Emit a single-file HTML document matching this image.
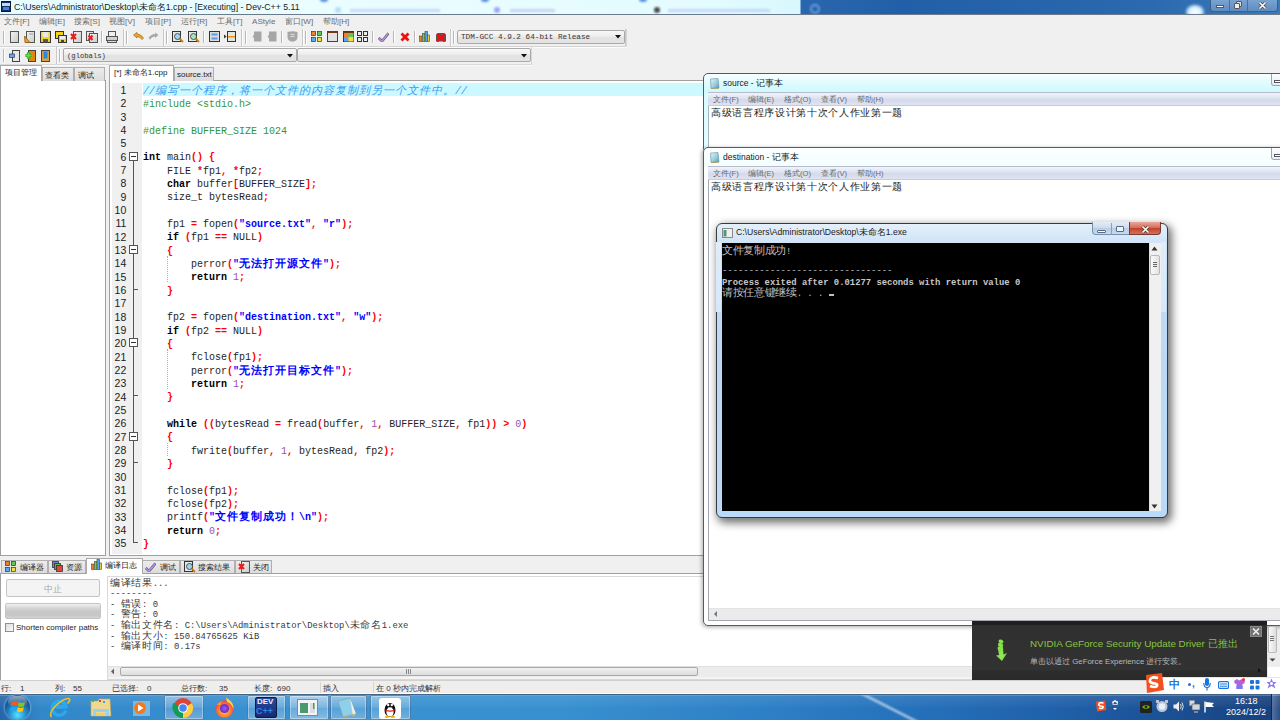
<!DOCTYPE html><html><head><meta charset="utf-8"><style>*{margin:0;padding:0;box-sizing:border-box}
html,body{width:1280px;height:720px;overflow:hidden;background:#f0f0f0;font-family:"Liberation Sans",sans-serif;font-size:9px;color:#000;position:relative}
.a{position:absolute}
.nw{white-space:nowrap}
#title{left:0;top:0;width:1280px;height:15px;overflow:hidden;background:linear-gradient(90deg,#e6fcff 0,#eafdff 300px,#e4fcff 700px,#d8f8fd 800px,#2a66ad 801px,#2160a8 900px,#2562aa 1000px,#2b6aaf 1150px,#3a7aba 1280px);border-bottom:1px solid #6b7b8c}
.menu span{position:absolute;top:1px;font-size:8.1px;line-height:11px;color:#6d6d6d;white-space:nowrap}
.sepv{position:absolute;width:2px;border-left:1px solid #c8c8c8;border-right:1px solid #fcfcfc}
.grip{position:absolute;width:2px;border-left:1px solid #b8b8b8;border-right:1px solid #fff}
.code{font-family:"Liberation Mono",monospace;font-size:10px;white-space:pre}
.k{font-weight:bold;color:#000}
.o{font-weight:bold;color:#ff0000}
.s{font-weight:bold;color:#0000ff}
.n{color:#9b4fb0}
.i{color:#1e1e1e}
.p{color:#33963a}
.c{color:#3a9cf2;font-style:italic}
.ln{position:absolute;left:108.3px;width:18px;text-align:right;font-family:"Liberation Sans",sans-serif;font-size:10.5px;color:#202020}
.cl{position:absolute;left:143px;height:13.333px;line-height:13.333px}
.tab{position:absolute;font-size:8px;line-height:11px;color:#1c1c1c;white-space:nowrap}
.ico{position:absolute}
.log{font-family:"Liberation Mono",monospace;font-size:8.9px;line-height:10.6px;white-space:pre;color:#3a3a3a}
.w{font-size:10px;letter-spacing:.67px}
.status span{position:absolute;top:2.5px;font-size:8px;line-height:10px;color:#333;white-space:nowrap}
.npmenu span{position:absolute;top:2px;font-size:7.6px;line-height:10px;color:#6a6a6a;white-space:nowrap}
.cw{font-size:11px;letter-spacing:1px}
</style></head><body>
<div id="title" class="a">
<div class="a" style="left:320px;top:-4px;width:8px;height:6px;border-radius:4px;background:#5a90e0;filter:blur(1px)"></div>
<div class="a" style="left:481px;top:-4px;width:8px;height:6px;border-radius:4px;background:#5a90e0;filter:blur(1px)"></div>
<div class="a" style="left:639px;top:-4px;width:8px;height:6px;border-radius:4px;background:#5a90e0;filter:blur(1px)"></div>
<div class="a" style="left:335px;top:7px;width:6px;height:6px;border-radius:3px;background:#b8dcf6;filter:blur(.8px)"></div>
<div class="a" style="left:494px;top:7px;width:6px;height:6px;border-radius:3px;background:#9aa8f0;filter:blur(.8px)"></div>
<div class="a" style="left:654px;top:7px;width:6px;height:6px;border-radius:3px;background:#4a4a4a;filter:blur(.8px)"></div>
<div class="a" style="left:350px;top:9px;width:90px;height:3px;background:#c4dcf6;filter:blur(1px)"></div>
<div class="a" style="left:510px;top:9px;width:45px;height:3px;background:#c8d4f4;filter:blur(1px)"></div>
<div class="a" style="left:668px;top:9px;width:102px;height:3px;background:#c4d8f6;filter:blur(1px)"></div>
<div class="a" style="left:810px;top:4px;width:10px;height:10px;border-radius:5px;border:2px solid #6a9ee0;filter:blur(1px)"></div>
<div class="a" style="left:1185px;top:4px;width:20px;height:16px;border-radius:10px;background:radial-gradient(#ffffff 0,#d8f0ff 45%,rgba(120,180,240,0) 75%);filter:blur(1px)"></div>
<div class="a" style="left:1px;top:1px;width:10px;height:11px;background:#10306a;border:1px solid #0a1a3c"><div class="a" style="left:0;top:1px;width:8px;height:3px;background:#c8d6ee"></div><div class="a" style="left:1px;top:5px;width:6px;height:3px;background:#3a86e0"></div></div>
<div class="a nw" style="left:14px;top:1px;font-size:8.74px;line-height:13px;color:#1a1a1a">C:\Users\Administrator\Desktop\未命名1.cpp - [Executing] - Dev-C++ 5.11</div>
<div class="a" style="left:1210px;top:0;width:68px;height:12px;border:1px solid #3e5f88;border-top:none;border-radius:0 0 3px 3px;background:linear-gradient(#7aa3d0,#5f8cc0)"></div>
<div class="a" style="left:1229px;top:0;width:1px;height:11px;background:#4c6f9a"></div>
<div class="a" style="left:1247px;top:0;width:1px;height:11px;background:#4c6f9a"></div>
<div class="a" style="left:1216px;top:5px;width:8px;height:3px;background:#fff;border:1px solid #556"></div>
<div class="a" style="left:1236px;top:1px;width:6px;height:6px;background:#ddd;border:1px solid #556;border-radius:1px"></div>
<div class="a" style="left:1234px;top:3px;width:6px;height:6px;background:#eee;border:1px solid #556;border-radius:1px"></div>
<svg class="a" style="left:1258px;top:1px" width="9" height="9"><path d="M1.5 1.5L7.5 7.5M7.5 1.5L1.5 7.5" stroke="#444" stroke-width="3"/><path d="M1.5 1.5L7.5 7.5M7.5 1.5L1.5 7.5" stroke="#fff" stroke-width="1.6"/></svg>
</div>
<div class="a menu" style="left:0;top:15px;width:1280px;height:13px">
<span style="left:4px">文件[F]</span>
<span style="left:39px">编辑[E]</span>
<span style="left:74px">搜索[S]</span>
<span style="left:109px">视图[V]</span>
<span style="left:145px">项目[P]</span>
<span style="left:181px">运行[R]</span>
<span style="left:217px">工具[T]</span>
<span style="left:252px">AStyle</span>
<span style="left:285px">窗口[W]</span>
<span style="left:323px">帮助[H]</span>
</div>
<div class="a" style="left:0;top:46px;width:626px;height:1px;background:#d4d4d4"></div>
<div class="a" style="left:0;top:47px;width:626px;height:1px;background:#fbfbfb"></div>
<div class="a" style="left:0;top:64px;width:532px;height:1px;background:#d8d8d8"></div>
<div class="a" style="left:0;top:65px;width:532px;height:1px;background:#fafafa"></div>
<div class="sepv" style="left:123px;top:29px;height:17px"></div>
<div class="sepv" style="left:162.5px;top:29px;height:17px"></div>
<div class="sepv" style="left:241px;top:29px;height:17px"></div>
<div class="sepv" style="left:301.5px;top:29px;height:17px"></div>
<div class="sepv" style="left:449.5px;top:29px;height:17px"></div>
<div class="sepv" style="left:625px;top:29px;height:17px"></div>
<div class="grip" style="left:3px;top:31px;height:13px"></div>
<div class="grip" style="left:126px;top:31px;height:13px"></div>
<div class="grip" style="left:166px;top:31px;height:13px"></div>
<div class="grip" style="left:245px;top:31px;height:13px"></div>
<div class="grip" style="left:305px;top:31px;height:13px"></div>
<div class="grip" style="left:453px;top:31px;height:13px"></div>
<div class="grip" style="left:101px;top:31px;height:12px"></div>
<div class="grip" style="left:203px;top:31px;height:12px"></div>
<div class="grip" style="left:281px;top:31px;height:12px"></div>
<div class="grip" style="left:372px;top:31px;height:12px"></div>
<div class="grip" style="left:393px;top:31px;height:12px"></div>
<div class="grip" style="left:414px;top:31px;height:12px"></div>
<div class="sepv" style="left:55.5px;top:47px;height:17px"></div>
<div class="grip" style="left:3px;top:49px;height:13px"></div>
<div class="grip" style="left:59px;top:49px;height:13px"></div>
<svg width="0" height="0" style="position:absolute"><defs><linearGradient id="pg" x1="0" y1="0" x2="1" y2="1"><stop offset="0" stop-color="#f4f4f4"/><stop offset="1" stop-color="#c9c9c9"/></linearGradient></defs></svg>
<svg class="ico" style="left:10px;top:31px" width="10" height="12" viewBox="0 0 10 12"><rect x="0.5" y="0.5" width="8" height="11" fill="url(#pg)" stroke="#555"/></svg>
<svg class="ico" style="left:24px;top:31px" width="11" height="12" viewBox="0 0 11 12"><rect x="2.5" y="0.5" width="8" height="11" fill="url(#pg)" stroke="#555"/><path d="M0.5 5 L6 11.5 L1 11.5 Z" fill="#f0a030" stroke="#8a5a10" stroke-width="0.8"/><path d="M5 3 L9 3" stroke="#999"/></svg>
<svg class="ico" style="left:40px;top:31px" width="11" height="12" viewBox="0 0 11 12"><rect x="0.5" y="0.5" width="10" height="11" fill="#f2d21a" stroke="#333"/><rect x="2.5" y="1" width="6" height="5" fill="#e8e8e8"/><rect x="3" y="8" width="5" height="3.5" fill="#555"/></svg>
<svg class="ico" style="left:55px;top:31px" width="12" height="12" viewBox="0 0 12 12"><rect x="0.5" y="0.5" width="8" height="7" fill="#f2d21a" stroke="#333"/><rect x="3.5" y="4.5" width="8" height="7" fill="#f2d21a" stroke="#333"/><rect x="5" y="5" width="5" height="3" fill="#eee"/><rect x="6" y="9" width="3" height="2.5" fill="#444"/></svg>
<svg class="ico" style="left:70px;top:31px" width="12" height="12" viewBox="0 0 12 12"><rect x="3.5" y="0.5" width="8" height="11" fill="url(#pg)" stroke="#555"/><path d="M1 3 L6 8 M6 3 L1 8" stroke="#e52020" stroke-width="2.2"/></svg>
<svg class="ico" style="left:86px;top:31px" width="12" height="12" viewBox="0 0 12 12"><rect x="0.5" y="0.5" width="7" height="9" fill="url(#pg)" stroke="#555"/><rect x="3.5" y="2.5" width="8" height="9" fill="url(#pg)" stroke="#555"/><path d="M2.5 4.5 L6.5 9 M6.5 4.5 L2.5 9" stroke="#e02020" stroke-width="2"/></svg>
<svg class="ico" style="left:106px;top:31px" width="12" height="12" viewBox="0 0 12 12"><rect x="2.5" y="0.5" width="7" height="5" fill="#eee" stroke="#555"/><rect x="0.5" y="5.5" width="11" height="4" fill="#cfcfcf" stroke="#555"/><rect x="1.5" y="9.5" width="9" height="2" fill="#ddd" stroke="#555"/></svg>
<svg class="ico" style="left:133px;top:32px" width="11" height="8" viewBox="0 0 11 8"><path d="M0.5 3 L4 0.5 L4 2 Q8 2 10.5 6 L9 7.5 Q7 4.5 4 4.5 L4 6 Z" fill="#f2a630" stroke="#9a6a10" stroke-width="0.7"/></svg>
<svg class="ico" style="left:148px;top:32px" width="11" height="8" viewBox="0 0 11 8"><path d="M10.5 3 L7 0.5 L7 2 Q3 2 0.5 6 L2 7.5 Q4 4.5 7 4.5 L7 6 Z" fill="#a8a8a8"/></svg>
<svg class="ico" style="left:172px;top:31px" width="12" height="12" viewBox="0 0 12 12"><rect x="0.5" y="0.5" width="8" height="10" fill="#e8e8e8" stroke="#333"/><circle cx="5.5" cy="5.5" r="3" fill="#9ed6ee" stroke="#333" stroke-width="0.8"/><path d="M7.5 7.5 L11 11" stroke="#c07a10" stroke-width="1.8"/></svg>
<svg class="ico" style="left:188px;top:31px" width="12" height="12" viewBox="0 0 12 12"><rect x="0.5" y="0.5" width="8" height="10" fill="#e8e8e8" stroke="#333"/><circle cx="5.5" cy="5.5" r="3" fill="#9ee8c8" stroke="#333" stroke-width="0.8"/><path d="M7.5 7.5 L11 11" stroke="#c07a10" stroke-width="1.8"/></svg>
<svg class="ico" style="left:209px;top:31px" width="11" height="11" viewBox="0 0 11 11"><rect x="0.5" y="0.5" width="10" height="10" fill="#dcdcdc" stroke="#333"/><rect x="2.5" y="2.5" width="6" height="2" fill="#5b9ae8"/><rect x="2.5" y="6.5" width="6" height="2" fill="#5b9ae8"/></svg>
<svg class="ico" style="left:224px;top:31px" width="12" height="11" viewBox="0 0 12 11"><rect x="3.5" y="0.5" width="8" height="10" fill="#e4e4e4" stroke="#333"/><rect x="4" y="5" width="7" height="1.5" fill="#e89a10"/><path d="M0 3.5 L2.5 5.5 L0 7.5Z" fill="#333"/></svg>
<svg class="ico" style="left:251px;top:31px" width="11" height="11" viewBox="0 0 11 11"><path d="M3 0.5 L10.5 0.5 L10.5 10.5 L3 10.5 L3 7 Q0.5 5.5 3 4 Z" fill="#a6a6a6"/></svg>
<svg class="ico" style="left:266px;top:31px" width="11" height="11" viewBox="0 0 11 11"><path d="M3 0.5 L10.5 0.5 L10.5 10.5 L3 10.5 L3 7 Q0.5 5.5 3 4 Z" fill="#a6a6a6"/></svg>
<svg class="ico" style="left:287px;top:31px" width="11" height="11" viewBox="0 0 11 11"><path d="M0.5 1 Q5.5 -0.5 10.5 1 L10.5 6 Q10.5 10 5.5 10.8 Q0.5 10 0.5 6 Z" fill="#a6a6a6"/><rect x="3.5" y="3" width="4" height="1" fill="#ddd"/><rect x="3.5" y="5" width="4" height="1" fill="#ddd"/></svg>
<svg class="ico" style="left:311px;top:31px" width="11" height="11" viewBox="0 0 11 11"><rect x="0.5" y="0.5" width="4" height="4" fill="#f08030" stroke="#333" stroke-width="0.7"/><rect x="6.5" y="0.5" width="4" height="4" fill="#5ac85a" stroke="#333" stroke-width="0.7"/><rect x="0.5" y="6.5" width="4" height="4" fill="#5aa8f0" stroke="#333" stroke-width="0.7"/><rect x="6.5" y="6.5" width="4" height="4" fill="#f0e040" stroke="#333" stroke-width="0.7"/></svg>
<svg class="ico" style="left:327px;top:31px" width="11" height="11" viewBox="0 0 11 11"><rect x="0.5" y="0.5" width="10" height="10" fill="#e2e2e2" stroke="#444"/><rect x="0.5" y="0.5" width="10" height="1.5" fill="#6a3a10"/></svg>
<svg class="ico" style="left:343px;top:31px" width="11" height="11" viewBox="0 0 11 11"><rect x="0.5" y="0.5" width="10" height="10" fill="#f08030" stroke="#333"/><rect x="0.5" y="0.5" width="10" height="1.5" fill="#6a3a10"/><rect x="5.5" y="2" width="5" height="4" fill="#5ac85a"/><rect x="1" y="6" width="4.5" height="4.5" fill="#5aa8f0"/><rect x="5.5" y="6" width="5" height="4.5" fill="#f0e040"/></svg>
<svg class="ico" style="left:357px;top:31px" width="11" height="11" viewBox="0 0 11 11"><rect x="0.5" y="0.5" width="4" height="4" fill="#eee" stroke="#333"/><rect x="6.5" y="0.5" width="4" height="4" fill="#eee" stroke="#333"/><rect x="0.5" y="6.5" width="4" height="4" fill="#eee" stroke="#333"/><rect x="6.5" y="6.5" width="4" height="4" fill="#eee" stroke="#333"/></svg>
<svg class="ico" style="left:378px;top:32px" width="11" height="10" viewBox="0 0 11 10"><path d="M0.8 6 L4 9.2 L10.5 1.2" fill="none" stroke="#555" stroke-width="2.6"/><path d="M0.8 6 L4 9.2 L10.5 1.2" fill="none" stroke="#b78ef0" stroke-width="1.6"/></svg>
<svg class="ico" style="left:400px;top:32px" width="10" height="10" viewBox="0 0 10 10"><path d="M1.5 1.5 L8.5 8.5 M8.5 1.5 L1.5 8.5" stroke="#ee1010" stroke-width="2.8"/></svg>
<svg class="ico" style="left:419px;top:31px" width="11" height="11" viewBox="0 0 11 11"><rect x="0.5" y="5" width="2.5" height="5.5" fill="#f08030" stroke="#444" stroke-width="0.6"/><rect x="3.5" y="2.5" width="2.5" height="8" fill="#6ad040" stroke="#444" stroke-width="0.6"/><rect x="6" y="0.5" width="2.5" height="10" fill="#5aa0f0" stroke="#444" stroke-width="0.6"/><rect x="8.5" y="4" width="2" height="6.5" fill="#e0d040" stroke="#444" stroke-width="0.6"/></svg>
<svg class="ico" style="left:435px;top:31px" width="12" height="11" viewBox="0 0 12 11"><path d="M1 10.5 L1 5 Q1 2 4 2 L8 2 Q11 2 11 5 L11 10.5Z" fill="#555"/><path d="M2 3 L10 10.5 M10 3 L2 10.5" stroke="#ee1010" stroke-width="2.6"/></svg>
<div class="a" style="left:457px;top:29.5px;width:168px;height:14px;border:1px solid #a9a9a9;border-radius:2px;background:linear-gradient(#f8f8f8,#ededed 45%,#e2e2e2 55%,#e4e4e4)"></div>
<div class="a nw" style="left:461px;top:32.0px;font-family:'Liberation Mono',monospace;font-size:7.7px;line-height:10px;color:#3a3434">TDM-GCC 4.9.2 64-bit Release</div>
<svg class="ico" style="left:615px;top:35.0px" width="6" height="4"><path d="M0 0 L6 0 L3 3.5Z" fill="#111"/></svg>
<div class="a" style="left:626px;top:29px;width:1px;height:17px;background:#d6d6d6"></div>
<div class="a" style="left:63px;top:48px;width:234px;height:14px;border:1px solid #a9a9a9;border-radius:2px;background:linear-gradient(#f8f8f8,#ededed 45%,#e2e2e2 55%,#e4e4e4)"></div>
<div class="a nw" style="left:67px;top:50.5px;font-family:'Liberation Mono',monospace;font-size:7.2px;line-height:10px;color:#3a3434">(globals)</div>
<svg class="ico" style="left:287px;top:53.5px" width="6" height="4"><path d="M0 0 L6 0 L3 3.5Z" fill="#111"/></svg>
<div class="a" style="left:297px;top:48px;width:234px;height:14px;border:1px solid #a9a9a9;border-radius:2px;background:linear-gradient(#f8f8f8,#ededed 45%,#e2e2e2 55%,#e4e4e4)"></div>
<svg class="ico" style="left:521px;top:53.5px" width="6" height="4"><path d="M0 0 L6 0 L3 3.5Z" fill="#111"/></svg>
<div class="a" style="left:531px;top:47px;width:1px;height:17px;background:#d6d6d6"></div>
<svg class="ico" style="left:9px;top:50px" width="11" height="12" viewBox="0 0 11 12"><rect x="3.5" y="0.5" width="7" height="11" fill="#e8e8e8" stroke="#444"/><rect x="0.5" y="4" width="5" height="3.5" fill="#6aa8ee" stroke="#335" stroke-width="0.7"/></svg>
<svg class="ico" style="left:25px;top:50px" width="11" height="12" viewBox="0 0 11 12"><rect x="3.5" y="0.5" width="7" height="11" fill="#e08a10" stroke="#444"/><path d="M0.5 5.5 L6.5 5.5 M3.5 2.5 L3.5 8.5" stroke="#2a8a1a" stroke-width="3.2"/><path d="M0.5 5.5 L6.5 5.5 M3.5 2.5 L3.5 8.5" stroke="#5ae040" stroke-width="1.8"/></svg>
<svg class="ico" style="left:41px;top:50px" width="9" height="12" viewBox="0 0 9 12"><rect x="0.5" y="0.5" width="8" height="11" fill="#e0a040" stroke="#444"/><rect x="2.5" y="1.5" width="4" height="7" fill="#2a8ae0"/></svg>
<div class="a" style="left:0;top:80px;width:106px;height:476px;background:#fff;border:1px solid #a0a0a0;border-top:1px solid #a0a0a0"></div>
<div class="a" style="left:42px;top:67px;width:32px;height:14px;background:linear-gradient(#ececec,#dcdcdc);border:1px solid #b0b0b0;border-bottom:none"></div>
<div class="a" style="left:74px;top:67px;width:31px;height:14px;background:linear-gradient(#ececec,#dcdcdc);border:1px solid #b0b0b0;border-bottom:none"></div>
<div class="a" style="left:0;top:65px;width:42px;height:16px;background:#fff;border:1px solid #a9a9a9;border-bottom:none"></div>
<div class="tab" style="left:5px;top:67px">项目管理</div>
<div class="tab" style="left:45px;top:70px">查看类</div>
<div class="tab" style="left:78px;top:70px">调试</div>
<div class="a" style="left:109px;top:80px;width:600px;height:476px;background:#fff;border:1px solid #a0a0a0"></div>
<div class="a" style="left:112px;top:82.5px;width:30px;height:471px;background:#f0f0f0"></div>
<div class="a" style="left:174px;top:67px;width:40px;height:14px;background:linear-gradient(#ececec,#dcdcdc);border:1px solid #b0b0b0;border-bottom:none"></div>
<div class="a" style="left:109px;top:65px;width:65px;height:16px;background:#fff;border:1px solid #a9a9a9;border-bottom:none"></div>
<div class="tab" style="left:114px;top:67px">[*] 未命名1.cpp</div>
<div class="tab" style="left:177px;top:69px">source.txt</div>
<div class="a" style="left:143px;top:82.5px;width:570px;height:13.333px;background:#ccf8ff"></div>
<div class="ln" style="top:84.00px;line-height:13.333px">1</div>
<div class="cl code" style="top:84.60px"><span class="c">//<span class="cw">编写一个程序，将一个文件的内容复制到另一个文件中。</span>//</span></div>
<div class="ln" style="top:97.33px;line-height:13.333px">2</div>
<div class="cl code" style="top:97.93px"><span class="p">#include &lt;stdio.h&gt;</span></div>
<div class="ln" style="top:110.67px;line-height:13.333px">3</div>
<div class="cl code" style="top:111.27px"></div>
<div class="ln" style="top:124.00px;line-height:13.333px">4</div>
<div class="cl code" style="top:124.60px"><span class="p">#define BUFFER_SIZE 1024</span></div>
<div class="ln" style="top:137.33px;line-height:13.333px">5</div>
<div class="cl code" style="top:137.93px"></div>
<div class="ln" style="top:150.67px;line-height:13.333px">6</div>
<div class="cl code" style="top:151.27px"><span class="k">int</span><span class="i"> main</span><span class="o">()</span><span class="i"> </span><span class="o">{</span></div>
<div class="ln" style="top:164.00px;line-height:13.333px">7</div>
<div class="cl code" style="top:164.60px"><span class="i">    FILE </span><span class="o">*</span><span class="i">fp1</span><span class="o">,</span><span class="i"> </span><span class="o">*</span><span class="i">fp2</span><span class="o">;</span></div>
<div class="ln" style="top:177.33px;line-height:13.333px">8</div>
<div class="cl code" style="top:177.93px"><span class="i">    </span><span class="k">char</span><span class="i"> buffer</span><span class="o">[</span><span class="i">BUFFER_SIZE</span><span class="o">];</span></div>
<div class="ln" style="top:190.66px;line-height:13.333px">9</div>
<div class="cl code" style="top:191.26px"><span class="i">    size_t bytesRead</span><span class="o">;</span></div>
<div class="ln" style="top:204.00px;line-height:13.333px">10</div>
<div class="cl code" style="top:204.60px"></div>
<div class="ln" style="top:217.33px;line-height:13.333px">11</div>
<div class="cl code" style="top:217.93px"><span class="i">    fp1 </span><span class="o">=</span><span class="i"> fopen</span><span class="o">(</span><span class="s">"source.txt"</span><span class="o">,</span><span class="i"> </span><span class="s">"r"</span><span class="o">);</span></div>
<div class="ln" style="top:230.66px;line-height:13.333px">12</div>
<div class="cl code" style="top:231.26px"><span class="i">    </span><span class="k">if</span><span class="i"> </span><span class="o">(</span><span class="i">fp1 </span><span class="o">==</span><span class="i"> NULL</span><span class="o">)</span></div>
<div class="ln" style="top:244.00px;line-height:13.333px">13</div>
<div class="cl code" style="top:244.60px"><span class="i">    </span><span class="o">{</span></div>
<div class="ln" style="top:257.33px;line-height:13.333px">14</div>
<div class="cl code" style="top:257.93px"><span class="i">        perror</span><span class="o">(</span><span class="s">"<span class="cw">无法打开源文件</span>"</span><span class="o">);</span></div>
<div class="ln" style="top:270.66px;line-height:13.333px">15</div>
<div class="cl code" style="top:271.26px"><span class="i">        </span><span class="k">return</span><span class="i"> </span><span class="n">1</span><span class="o">;</span></div>
<div class="ln" style="top:284.00px;line-height:13.333px">16</div>
<div class="cl code" style="top:284.60px"><span class="i">    </span><span class="o">}</span></div>
<div class="ln" style="top:297.33px;line-height:13.333px">17</div>
<div class="cl code" style="top:297.93px"></div>
<div class="ln" style="top:310.66px;line-height:13.333px">18</div>
<div class="cl code" style="top:311.26px"><span class="i">    fp2 </span><span class="o">=</span><span class="i"> fopen</span><span class="o">(</span><span class="s">"destination.txt"</span><span class="o">,</span><span class="i"> </span><span class="s">"w"</span><span class="o">);</span></div>
<div class="ln" style="top:323.99px;line-height:13.333px">19</div>
<div class="cl code" style="top:324.59px"><span class="i">    </span><span class="k">if</span><span class="i"> </span><span class="o">(</span><span class="i">fp2 </span><span class="o">==</span><span class="i"> NULL</span><span class="o">)</span></div>
<div class="ln" style="top:337.33px;line-height:13.333px">20</div>
<div class="cl code" style="top:337.93px"><span class="i">    </span><span class="o">{</span></div>
<div class="ln" style="top:350.66px;line-height:13.333px">21</div>
<div class="cl code" style="top:351.26px"><span class="i">        fclose</span><span class="o">(</span><span class="i">fp1</span><span class="o">);</span></div>
<div class="ln" style="top:363.99px;line-height:13.333px">22</div>
<div class="cl code" style="top:364.59px"><span class="i">        perror</span><span class="o">(</span><span class="s">"<span class="cw">无法打开目标文件</span>"</span><span class="o">);</span></div>
<div class="ln" style="top:377.33px;line-height:13.333px">23</div>
<div class="cl code" style="top:377.93px"><span class="i">        </span><span class="k">return</span><span class="i"> </span><span class="n">1</span><span class="o">;</span></div>
<div class="ln" style="top:390.66px;line-height:13.333px">24</div>
<div class="cl code" style="top:391.26px"><span class="i">    </span><span class="o">}</span></div>
<div class="ln" style="top:403.99px;line-height:13.333px">25</div>
<div class="cl code" style="top:404.59px"></div>
<div class="ln" style="top:417.32px;line-height:13.333px">26</div>
<div class="cl code" style="top:417.93px"><span class="i">    </span><span class="k">while</span><span class="i"> </span><span class="o">((</span><span class="i">bytesRead </span><span class="o">=</span><span class="i"> fread</span><span class="o">(</span><span class="i">buffer</span><span class="o">,</span><span class="i"> </span><span class="n">1</span><span class="o">,</span><span class="i"> BUFFER_SIZE</span><span class="o">,</span><span class="i"> fp1</span><span class="o">))</span><span class="i"> </span><span class="o">&gt;</span><span class="i"> </span><span class="n">0</span><span class="o">)</span></div>
<div class="ln" style="top:430.66px;line-height:13.333px">27</div>
<div class="cl code" style="top:431.26px"><span class="i">    </span><span class="o">{</span></div>
<div class="ln" style="top:443.99px;line-height:13.333px">28</div>
<div class="cl code" style="top:444.59px"><span class="i">        fwrite</span><span class="o">(</span><span class="i">buffer</span><span class="o">,</span><span class="i"> </span><span class="n">1</span><span class="o">,</span><span class="i"> bytesRead</span><span class="o">,</span><span class="i"> fp2</span><span class="o">);</span></div>
<div class="ln" style="top:457.32px;line-height:13.333px">29</div>
<div class="cl code" style="top:457.92px"><span class="i">    </span><span class="o">}</span></div>
<div class="ln" style="top:470.66px;line-height:13.333px">30</div>
<div class="cl code" style="top:471.26px"></div>
<div class="ln" style="top:483.99px;line-height:13.333px">31</div>
<div class="cl code" style="top:484.59px"><span class="i">    fclose</span><span class="o">(</span><span class="i">fp1</span><span class="o">);</span></div>
<div class="ln" style="top:497.32px;line-height:13.333px">32</div>
<div class="cl code" style="top:497.92px"><span class="i">    fclose</span><span class="o">(</span><span class="i">fp2</span><span class="o">);</span></div>
<div class="ln" style="top:510.66px;line-height:13.333px">33</div>
<div class="cl code" style="top:511.26px"><span class="i">    printf</span><span class="o">(</span><span class="s">"<span class="cw">文件复制成功！</span>\n"</span><span class="o">);</span></div>
<div class="ln" style="top:523.99px;line-height:13.333px">34</div>
<div class="cl code" style="top:524.59px"><span class="i">    </span><span class="k">return</span><span class="i"> </span><span class="n">0</span><span class="o">;</span></div>
<div class="ln" style="top:537.32px;line-height:13.333px">35</div>
<div class="cl code" style="top:537.92px"><span class="o">}</span></div>
<div class="a" style="left:133px;top:160.7px;width:1px;height:381.2px;background:#555"></div>
<div class="a" style="left:133px;top:288.5px;width:5px;height:1px;background:#555"></div>
<div class="a" style="left:133px;top:395.2px;width:5px;height:1px;background:#555"></div>
<div class="a" style="left:133px;top:461.8px;width:5px;height:1px;background:#555"></div>
<div class="a" style="left:133px;top:541.8px;width:5px;height:1px;background:#555"></div>
<div class="a" style="left:129px;top:151.7px;width:9px;height:9px;border:1px solid #555;background:#fff"><div class="a" style="left:1px;top:3px;width:5px;height:1px;background:#333"></div></div>
<div class="a" style="left:129px;top:245.0px;width:9px;height:9px;border:1px solid #555;background:#fff"><div class="a" style="left:1px;top:3px;width:5px;height:1px;background:#333"></div></div>
<div class="a" style="left:129px;top:338.3px;width:9px;height:9px;border:1px solid #555;background:#fff"><div class="a" style="left:1px;top:3px;width:5px;height:1px;background:#333"></div></div>
<div class="a" style="left:129px;top:431.7px;width:9px;height:9px;border:1px solid #555;background:#fff"><div class="a" style="left:1px;top:3px;width:5px;height:1px;background:#333"></div></div>
<div class="a" style="left:167px;top:255.8px;width:0;height:26.7px;border-left:1px dotted #b0b0b0"></div>
<div class="a" style="left:167px;top:349.2px;width:0;height:40.0px;border-left:1px dotted #b0b0b0"></div>
<div class="a" style="left:167px;top:442.5px;width:0;height:13.3px;border-left:1px dotted #b0b0b0"></div>
<div class="a" style="left:0;top:573px;width:1280px;height:108px;background:#fff;border-top:1px solid #a0a0a0;border-left:1px solid #a0a0a0"></div>
<div class="a" style="left:1px;top:560px;width:47px;height:13px;background:linear-gradient(#ececec,#dcdcdc);border:1px solid #b0b0b0;border-bottom:none"></div>
<div class="a" style="left:48px;top:560px;width:38px;height:13px;background:linear-gradient(#ececec,#dcdcdc);border:1px solid #b0b0b0;border-bottom:none"></div>
<div class="a" style="left:142px;top:560px;width:38px;height:13px;background:linear-gradient(#ececec,#dcdcdc);border:1px solid #b0b0b0;border-bottom:none"></div>
<div class="a" style="left:180px;top:560px;width:55px;height:13px;background:linear-gradient(#ececec,#dcdcdc);border:1px solid #b0b0b0;border-bottom:none"></div>
<div class="a" style="left:235px;top:560px;width:37px;height:13px;background:linear-gradient(#ececec,#dcdcdc);border:1px solid #b0b0b0;border-bottom:none"></div>
<div class="a" style="left:86px;top:558px;width:57px;height:16px;background:#fff;border:1px solid #a9a9a9;border-bottom:none"></div>
<div class="tab" style="left:20px;top:562px">编译器</div>
<div class="tab" style="left:66px;top:562px">资源</div>
<div class="tab" style="left:105px;top:560px">编译日志</div>
<div class="tab" style="left:160px;top:562px">调试</div>
<div class="tab" style="left:198px;top:562px">搜索结果</div>
<div class="tab" style="left:253px;top:562px">关闭</div>
<svg class="ico" style="left:5px;top:561px" width="11" height="11" viewBox="0 0 11 11"><rect x="0.5" y="0.5" width="4" height="4" fill="#f08030" stroke="#333" stroke-width="0.7"/><rect x="6.5" y="0.5" width="4" height="4" fill="#5ac85a" stroke="#333" stroke-width="0.7"/><rect x="0.5" y="6.5" width="4" height="4" fill="#5aa8f0" stroke="#333" stroke-width="0.7"/><rect x="6.5" y="6.5" width="4" height="4" fill="#f0e040" stroke="#333" stroke-width="0.7"/></svg>
<svg class="ico" style="left:52px;top:561px" width="11" height="11" viewBox="0 0 11 11"><rect x="0.5" y="0.5" width="6" height="6" fill="#7a7ae8" stroke="#333" stroke-width="0.8"/><rect x="2.5" y="2.5" width="6" height="6" fill="#40c040" stroke="#333" stroke-width="0.8"/><rect x="4.5" y="4.5" width="6" height="6" fill="#e84040" stroke="#333" stroke-width="0.8"/></svg>
<svg class="ico" style="left:91px;top:559px" width="11" height="11" viewBox="0 0 11 11"><rect x="0.5" y="5" width="2.5" height="5.5" fill="#f08030" stroke="#444" stroke-width="0.6"/><rect x="3.5" y="2.5" width="2.5" height="8" fill="#6ad040" stroke="#444" stroke-width="0.6"/><rect x="6" y="0.5" width="2.5" height="10" fill="#5aa0f0" stroke="#444" stroke-width="0.6"/><rect x="8.5" y="4" width="2" height="6.5" fill="#e0d040" stroke="#444" stroke-width="0.6"/></svg>
<svg class="ico" style="left:145px;top:562px" width="11" height="10" viewBox="0 0 11 10"><path d="M0.8 6 L4 9.2 L10.5 1.2" fill="none" stroke="#555" stroke-width="2.6"/><path d="M0.8 6 L4 9.2 L10.5 1.2" fill="none" stroke="#b78ef0" stroke-width="1.6"/></svg>
<svg class="ico" style="left:184px;top:561px" width="12" height="12" viewBox="0 0 12 12"><rect x="0.5" y="0.5" width="8" height="10" fill="#e8e8e8" stroke="#333"/><circle cx="5.5" cy="5.5" r="3" fill="#9ed6ee" stroke="#333" stroke-width="0.8"/><path d="M7.5 7.5 L11 11" stroke="#c07a10" stroke-width="1.8"/></svg>
<svg class="ico" style="left:238px;top:561px" width="12" height="12" viewBox="0 0 12 12"><rect x="3.5" y="0.5" width="8" height="11" fill="url(#pg)" stroke="#555"/><path d="M1 3 L6 8 M6 3 L1 8" stroke="#e52020" stroke-width="2.2"/></svg>
<div class="a nw" style="left:6px;top:579px;width:94px;height:18px;border:1px solid #c4c4c4;border-radius:2px;background:#f4f4f4;color:#a8a8a8;font-size:9px;line-height:19px;text-align:center">中止</div>
<div class="a" style="left:5px;top:602.5px;width:96px;height:16px;border:1px solid #c4c4c4;border-radius:2px;background:linear-gradient(#f0f0f0,#dadada 25%,#c8c8c8 50%,#c6c6c6 80%,#d4d4d4)"></div>
<div class="a" style="left:5px;top:623px;width:9px;height:9px;border:1px solid #8f8f8f;background:linear-gradient(135deg,#dcdcdc,#fafafa)"></div>
<div class="a nw" style="left:16px;top:622px;font-size:8px;line-height:11px;color:#222">Shorten compiler paths</div>
<div class="a" style="left:107px;top:576px;width:1173px;height:104px;border-left:1px solid #dadada;border-top:1px solid #dadada;background:#fff"></div>
<div class="a" style="left:1267px;top:577px;width:13px;height:90px;background:#ededed;border-left:1px solid #e2e2e2"></div>
<div class="a" style="left:108px;top:677px;width:1172px;height:3px;background:#f4f4f4;border-bottom:1px solid #d8d8d8"></div>
<div class="a log" style="left:110px;top:578.5px"><span class="w">编译结果</span>...</div>
<div class="a log" style="left:110px;top:589.1px">--------</div>
<div class="a log" style="left:110px;top:599.7px">- <span class="w">错误</span>: 0</div>
<div class="a log" style="left:110px;top:610.3px">- <span class="w">警告</span>: 0</div>
<div class="a log" style="left:110px;top:620.9px">- <span class="w">输出文件名</span>: C:\Users\Administrator\Desktop\<span class="w">未命名</span>1.exe</div>
<div class="a log" style="left:110px;top:631.5px">- <span class="w">输出大小</span>: 150.84765625 KiB</div>
<div class="a log" style="left:110px;top:642.1px">- <span class="w">编译时间</span>: 0.17s</div>
<div class="a" style="left:108px;top:666px;width:1160px;height:11px;background:#ececec;border-top:1px solid #e0e0e0"></div>
<svg class="ico" style="left:110px;top:668px" width="6" height="7"><path d="M4 0.5 L1 3.5 L4 6.5Z" fill="#606060"/></svg>
<div class="a" style="left:120px;top:667px;width:578px;height:9px;border:1px solid #a9a9a9;border-radius:2px;background:linear-gradient(#f2f2f2,#dcdcdc)"></div>
<div class="a" style="left:406px;top:669px;width:5px;height:5px;border-left:1px solid #888;border-right:1px solid #888"><div class="a" style="left:1px;top:0;width:1px;height:5px;background:#888"></div></div>
<div class="a status" style="left:0;top:680px;width:1280px;height:14px;background:#f0eded;border-top:1px solid #d0d0d0">
<span style="left:1px">行:</span>
<span style="left:20px">1</span>
<span style="left:55px">列:</span>
<span style="left:73px">55</span>
<span style="left:112px">已选择:</span>
<span style="left:147px">0</span>
<span style="left:181px">总行数:</span>
<span style="left:219px">35</span>
<span style="left:254px">长度:</span>
<span style="left:277px">690</span>
<span style="left:323px">插入</span>
<span style="left:376px">在 0 秒内完成解析</span>
<div class="a" style="left:320px;top:1px;width:1px;height:12px;background:#d8d4d4"></div>
<div class="a" style="left:373px;top:1px;width:1px;height:12px;background:#d8d4d4"></div>
</div>
<div class="a" style="left:0;top:694px;width:1280px;height:26px;overflow:hidden;background:linear-gradient(90deg,#2566aa 0,#3287c8 40px,#3a92d2 300px,#3890d0 560px,#2d80c6 760px,#2672bc 900px,#1f60aa 1060px,#1a4c8e 1200px,#183f7c 1280px)"><div class="a" style="left:0;top:0;width:1280px;height:13px;background:linear-gradient(rgba(255,255,255,.10),rgba(255,255,255,.02))"></div><div class="a" style="left:884px;top:-2px;width:12px;height:32px;transform:skewX(63deg);background:linear-gradient(90deg,rgba(255,255,255,0),rgba(255,255,255,.55),rgba(255,255,255,0));filter:blur(1.2px)"></div></div>
<div class="a" style="left:0;top:693px;width:1280px;height:1px;background:#fdfdfd"></div>
<div class="a" style="left:0;top:694px;width:1280px;height:1px;background:#3f6486"></div>
<div class="a" style="left:0;top:695px;width:1280px;height:1px;background:#7ab4e0;opacity:.45"></div>
<div class="a" style="left:703px;top:73px;width:590px;height:80px;border:1px solid #5a5a5a;border-radius:5px 0 0 5px;background:linear-gradient(#f8ffff,#e2fcff 8px,#cdf9ff 18px,#d8fbff 19px,#e6fcff);overflow:hidden;"></div>
<svg class="ico" style="left:709px;top:78px" width="11" height="11"><defs><linearGradient id="np73" x1="0" y1="0" x2="1" y2="1"><stop offset="0" stop-color="#e8f6fa"/><stop offset=".6" stop-color="#8ecbe0"/><stop offset="1" stop-color="#4a9ab8"/></linearGradient></defs><path d="M1.5 1 L9 0.5 L10 10 L2 10.5Z" fill="url(#np73)" stroke="#6a8a96" stroke-width="0.6"/><path d="M2 10.5 L10 10" stroke="#b89a60" stroke-width="1"/></svg>
<div class="a nw" style="left:723px;top:78px;font-size:8.5px;line-height:11px;color:#1a1a1a">source - 记事本</div>
<div class="a" style="left:1271px;top:74px;width:22px;height:12px;border:1px solid #9aa6b2;border-top:none;border-radius:0 0 0 3px;background:linear-gradient(#fdfdfd,#e8eef2)"></div>
<div class="a" style="left:1274px;top:80px;width:7px;height:3px;border:1px solid #556;background:#fff"></div>
<div class="a npmenu" style="left:708px;top:92px;width:580px;height:14px;background:linear-gradient(#f2f4fa,#dde2f0 45%,#d4daec 55%,#dfe3f1);border-top:1px solid #b4bccb;border-bottom:1px solid #c8ccd6">
<span style="left:5px">文件(F)</span>
<span style="left:40px">编辑(E)</span>
<span style="left:76px">格式(O)</span>
<span style="left:113px">查看(V)</span>
<span style="left:149px">帮助(H)</span>
</div>
<div class="a" style="left:708px;top:106px;width:580px;height:45px;background:#fff;border-left:1px solid #a8b4c0"></div>
<div class="a nw" style="left:711px;top:106px;font-size:10px;letter-spacing:.67px;line-height:14px;color:#222">高级语言程序设计第十次个人作业第一题</div>
<div class="a" style="left:703px;top:147px;width:590px;height:479px;border:1px solid #5a5a5a;border-radius:5px 0 0 5px;background:linear-gradient(#fbffff,#f4feff 18px,#ffffff 19px,#ffffff);overflow:hidden;box-shadow:-1px 1px 4px rgba(0,0,0,.35)"></div>
<svg class="ico" style="left:709px;top:152px" width="11" height="11"><defs><linearGradient id="np147" x1="0" y1="0" x2="1" y2="1"><stop offset="0" stop-color="#e8f6fa"/><stop offset=".6" stop-color="#8ecbe0"/><stop offset="1" stop-color="#4a9ab8"/></linearGradient></defs><path d="M1.5 1 L9 0.5 L10 10 L2 10.5Z" fill="url(#np147)" stroke="#6a8a96" stroke-width="0.6"/><path d="M2 10.5 L10 10" stroke="#b89a60" stroke-width="1"/></svg>
<div class="a nw" style="left:723px;top:152px;font-size:8.5px;line-height:11px;color:#1a1a1a">destination - 记事本</div>
<div class="a" style="left:1271px;top:148px;width:22px;height:12px;border:1px solid #9aa6b2;border-top:none;border-radius:0 0 0 3px;background:linear-gradient(#fdfdfd,#e8eef2)"></div>
<div class="a" style="left:1274px;top:154px;width:7px;height:3px;border:1px solid #556;background:#fff"></div>
<div class="a npmenu" style="left:708px;top:166px;width:580px;height:14px;background:linear-gradient(#f2f4fa,#dde2f0 45%,#d4daec 55%,#dfe3f1);border-top:1px solid #b4bccb;border-bottom:1px solid #c8ccd6">
<span style="left:5px">文件(F)</span>
<span style="left:40px">编辑(E)</span>
<span style="left:76px">格式(O)</span>
<span style="left:113px">查看(V)</span>
<span style="left:149px">帮助(H)</span>
</div>
<div class="a" style="left:708px;top:180px;width:580px;height:441px;background:#fff;border-left:1px solid #a4a8b0;border-bottom:1px solid #a4a8b0"></div>
<div class="a nw" style="left:711px;top:180px;font-size:10px;letter-spacing:.67px;line-height:14px;color:#222">高级语言程序设计第十次个人作业第一题</div>
<div class="a" style="left:709px;top:607.5px;width:580px;height:12px;background:#ebebeb;border-top:1px solid #e4e4e4"></div>
<svg class="ico" style="left:713px;top:611px" width="5" height="6"><path d="M4 0 L1 3 L4 6Z" fill="#777"/></svg>
<div class="a" style="left:716px;top:223px;width:451px;height:294px;border-radius:6px;box-shadow:3px 4px 9px 2px rgba(0,0,0,.55)"></div>
<div class="a" style="left:715.5px;top:222.5px;width:452px;height:295px;border:1px solid #3a3a3a;border-radius:6px;background:linear-gradient(#e4f0fb 0,#cfe2f6 20px,#bcd9f6 90px,#b9daf8 100%)"></div>
<div class="a" style="left:716px;top:242px;width:5px;height:70px;background:linear-gradient(#e0ecf8,#d6e8f8)"></div>
<div class="a" style="left:1161px;top:242px;width:5px;height:70px;background:linear-gradient(#e0ecf8,#d6e8f8)"></div>
<svg class="ico" style="left:722px;top:228px" width="11" height="10" viewBox="0 0 11 10"><rect x="0.5" y="0.5" width="10" height="9" fill="#f0f0f0" stroke="#8a8a8a"/><rect x="1.5" y="2" width="3" height="6.5" fill="#4a9a78"/></svg>
<div class="a nw" style="left:736px;top:227px;font-size:8.6px;line-height:11px;color:#1a1a1a">C:\Users\Administrator\Desktop\未命名1.exe</div>
<div class="a" style="left:1092px;top:222px;width:38px;height:13px;border:1px solid #7790ad;border-top:none;border-radius:0 0 0 4px;background:linear-gradient(#e4edf7,#cbdbed 50%,#b7cbe3 51%,#c8dbf0)"></div>
<div class="a" style="left:1111px;top:223px;width:1px;height:12px;background:#8aa0ba"></div>
<div class="a" style="left:1129px;top:222px;width:32px;height:13px;border:1px solid #7a3a30;border-top:none;border-radius:0 0 4px 0;background:linear-gradient(#e8a89a,#d26a58 50%,#c0402a 51%,#d8705a)"></div>
<div class="a" style="left:1097px;top:230px;width:9px;height:3px;background:#fff;border:1px solid #5a6a80;border-radius:1px"></div>
<div class="a" style="left:1116px;top:226px;width:8px;height:6px;background:#eef3f8;border:1px solid #5a6a80;border-radius:1px"></div>
<svg class="ico" style="left:1141px;top:225px" width="9" height="9" viewBox="0 0 9 9"><path d="M1.5 1.5L7.5 7.5M7.5 1.5L1.5 7.5" stroke="#5a2a20" stroke-width="3"/><path d="M1.5 1.5L7.5 7.5M7.5 1.5L1.5 7.5" stroke="#fff" stroke-width="1.7"/></svg>
<div class="a" style="left:722px;top:243px;width:427px;height:268px;background:#000"></div>
<div class="a" style="left:1149px;top:243px;width:12px;height:268px;background:#f0f0f0;border-left:1px solid #e0e0e0"></div>
<svg class="ico" style="left:1151px;top:246px" width="7" height="5" viewBox="0 0 7 5"><path d="M0.5 4.5 L3.5 0.5 L6.5 4.5Z" fill="#333"/></svg>
<div class="a" style="left:1150px;top:255px;width:10px;height:20px;border:1px solid #b8b8b8;border-radius:2px;background:linear-gradient(90deg,#fbfbfb,#e2e2e2)"></div>
<div class="a" style="left:1153px;top:262px;width:4px;height:5px;border-top:1px solid #666;border-bottom:1px solid #666"><div class="a" style="left:0;top:1px;width:4px;height:1px;background:#666"></div></div>
<svg class="ico" style="left:1151px;top:504px" width="7" height="5" viewBox="0 0 7 5"><path d="M0.5 0.5 L3.5 4.5 L6.5 0.5Z" fill="#333"/></svg>
<div class="a nw" style="left:722px;top:243px;font-size:11px;letter-spacing:-.33px;line-height:14px;color:#c0c0c0">文件复制成功<span style="font-family:'Liberation Mono',monospace;font-size:8.9px;letter-spacing:0">!</span></div>
<div class="a nw" style="left:722px;top:266px;font-family:'Liberation Mono',monospace;font-size:8.9px;line-height:10px;color:#c0c0c0">--------------------------------</div>
<div class="a nw" style="left:722px;top:276px;font-family:'Liberation Mono',monospace;font-weight:bold;font-size:8.9px;line-height:10px;color:#c8c8c8;top:278px">Process exited after 0.01277 seconds with return value 0</div>
<div class="a nw" style="left:722px;top:284.5px;font-size:11px;letter-spacing:-.33px;line-height:14px;color:#c0c0c0">请按任意键继续<span style="font-family:'Liberation Mono',monospace;font-size:8.9px;letter-spacing:0;white-space:pre">. . .</span></div>
<div class="a" style="left:829px;top:294px;width:5px;height:2px;background:#c0c0c0"></div>
<div class="a" style="left:972px;top:621px;width:295px;height:59px;background:linear-gradient(#303030,#323232 45px,#2c2c2c 46px,#2a2a2a);border-top:4px solid #1f1f1f"></div>
<div class="a" style="left:1250px;top:626px;width:12px;height:11px;background:#707070;border:1px solid #8a8a8a"></div>
<svg class="ico" style="left:1252px;top:628px" width="8" height="7" viewBox="0 0 8 7"><path d="M1 0.5L7 6.5M7 0.5L1 6.5" stroke="#eee" stroke-width="1.6"/></svg>
<svg class="ico" style="left:993px;top:638px" width="16" height="26" viewBox="0 0 16 26"><g style="filter:blur(.35px)" fill="#86e04a"><ellipse cx="8" cy="3.5" rx="2.6" ry="1.8" transform="rotate(25 8 3.5)"/><ellipse cx="7.6" cy="7" rx="2.8" ry="2" transform="rotate(25 7.6 7)"/><ellipse cx="7.3" cy="10.5" rx="2.8" ry="2" transform="rotate(20 7.3 10.5)"/><path d="M5 11 L10 9 L10.5 16.5 L14 15 L9 23 L3 17.5 L6 17Z"/></g><path d="M7.5 14 L9.5 13.5 L9.8 20 L7 21Z" fill="#9cf060" opacity=".6"/></svg>
<div class="a nw" style="left:1030px;top:637px;font-size:9.83px;line-height:14px;color:#88c540">NVIDIA GeForce Security Update Driver 已推出</div>
<div class="a nw" style="left:1030px;top:656px;font-size:7.86px;line-height:12px;color:#b8b8b8">单击以通过 GeForce Experience 进行安装。</div>
<svg class="ico" style="left:1258px;top:668px" width="4" height="5" viewBox="0 0 4 5"><path d="M0 0 L3 2.5 L0 5Z" fill="#111"/></svg>
<div class="a" style="left:1268px;top:626px;width:9px;height:27px;border:1px solid #bbb;border-radius:2px;background:linear-gradient(90deg,#fafafa,#dcdcdc)"></div>
<div class="a" style="left:1270px;top:636px;width:4px;height:5px;border-top:1px solid #777;border-bottom:1px solid #777"><div class="a" style="left:0;top:1px;width:4px;height:1px;background:#777"></div></div>
<svg class="ico" style="left:1269px;top:658px" width="7" height="4" viewBox="0 0 7 4"><path d="M0.5 0.5 L3.5 3.5 L6.5 0.5Z" fill="#444"/></svg>
<div class="a" style="left:1160px;top:677px;width:120px;height:17px;background:#fff;border-top:1px solid #e6e6e6"></div>
<svg class="ico" style="left:1143px;top:673px" width="22" height="21" viewBox="0 0 22 21"><path d="M3 2 L19 0 L21 17 L4 20Z" fill="#f4501e"/><path d="M15 5 Q8 3 7 7 Q6 10 12 10.5 Q15 11 14 13 Q12 15 7 13" fill="none" stroke="#fff" stroke-width="2.6"/></svg>
<div class="a nw" style="left:1169px;top:677px;font-size:11px;line-height:14px;font-weight:bold;color:#1a74e0">中</div>
<div class="a" style="left:1188px;top:683px;width:3px;height:3px;border-radius:2px;background:#1a74e0"></div>
<div class="a nw" style="left:1192px;top:678px;font-size:10px;line-height:12px;font-weight:bold;color:#1a74e0">,</div>
<svg class="ico" style="left:1203px;top:678px" width="8" height="13" viewBox="0 0 8 13"><rect x="2" y="0" width="4" height="8" rx="2" fill="#1a74e0"/><path d="M0.8 5 Q0.8 9.5 4 9.5 Q7.2 9.5 7.2 5" fill="none" stroke="#1a74e0" stroke-width="1.2"/><path d="M4 9.5 L4 12.5" stroke="#1a74e0" stroke-width="1.2"/></svg>
<svg class="ico" style="left:1218px;top:681px" width="11" height="8" viewBox="0 0 11 8"><rect x="0.6" y="0.6" width="9.8" height="6.8" rx="1" fill="none" stroke="#1a74e0" stroke-width="1.2"/><path d="M2 3 L9 3 M2 5.2 L9 5.2" stroke="#1a74e0" stroke-width="1"/></svg>
<svg class="ico" style="left:1234px;top:678px" width="11" height="12" viewBox="0 0 11 12"><path d="M0 3 L3 1 L5 2.5 L8 1 L11 3 L10 6 L8.5 5.5 L8.5 11 L2.5 11 L2.5 5.5 L1 6Z" fill="#b060e0"/><path d="M2.5 8 L8.5 8 L8.5 11 L2.5 11Z" fill="#6a80f0"/><circle cx="9.5" cy="1.5" r="1.5" fill="#f03030"/></svg>
<svg class="ico" style="left:1250px;top:680px" width="10" height="10" viewBox="0 0 10 10"><rect x="0" y="0" width="4" height="4" rx="1" fill="#1a74e0"/><rect x="5.5" y="0" width="4" height="4" rx="1" fill="#1a74e0"/><rect x="0" y="5.5" width="4" height="4" rx="1" fill="#1a74e0"/><rect x="5.5" y="5.5" width="4" height="4" rx="1" fill="#1a74e0"/></svg>
<svg class="ico" style="left:1266px;top:678px" width="11" height="12" viewBox="0 0 11 12"><path d="M5.5 0.5 L7 4 L10.5 4 L8 6.5 L9.5 10.5 L5.5 8 L1.5 10.5 L3 6.5 L0.5 4 L4 4Z" fill="#8a7af0"/><circle cx="5.5" cy="5.5" r="1.5" fill="#fff"/></svg>
<div class="a" style="left:5px;top:695px;width:25px;height:25px;border-radius:13px;background:radial-gradient(circle at 50% 80%,#5ee0ff 0,#2a9ad8 30%,#1a5a98 60%,#2a5a8a 80%,#7aaad0 100%);box-shadow:0 0 2px 1px rgba(170,220,255,.45)"></div>
<div class="a" style="left:8px;top:696px;width:19px;height:10px;border-radius:10px 10px 6px 6px;background:linear-gradient(rgba(255,255,255,.45),rgba(255,255,255,.05))"></div>
<svg class="ico" style="left:10px;top:699px" width="16" height="15" viewBox="0 0 16 15"><path d="M1.5 3 Q4.5 1.5 7.5 3 L6.8 7 Q3.8 5.6 0.8 7Z" fill="#f25a22"/><path d="M8.5 3.3 Q11.5 4.6 14.8 3.2 L14 7.2 Q11 8.6 7.8 7.3Z" fill="#8ac220"/><path d="M0.6 8 Q3.6 6.7 6.6 8.1 L5.9 12.2 Q2.9 10.8 -0.1 12.2Z" fill="#1aa8ef"/><path d="M7.6 8.3 Q10.6 9.6 13.8 8.2 L13 12.3 Q10 13.7 6.9 12.4Z" fill="#ffc010"/></svg>
<svg class="ico" style="left:49px;top:697px" width="22" height="22" viewBox="0 0 22 22"><path d="M16.8 13.5 A7 7 0 1 1 17 9.5 L5.5 9.5" fill="none" stroke="#2aa8f0" stroke-width="3.4"/><path d="M5 10.6 L17.5 10.6" stroke="#2aa8f0" stroke-width="2"/><path d="M2.5 20 Q-0.5 16 7 8.5 Q15 1 20 1.5 Q22 3 18.5 6.5" fill="none" stroke="#f2c01e" stroke-width="1.6"/></svg>
<svg class="ico" style="left:90px;top:697px" width="22" height="21" viewBox="0 0 22 21"><path d="M1 4 L8 4 L9 2 L20 2 L21 19 L1 19Z" fill="#f0d890" stroke="#c8a850" stroke-width="0.6"/><rect x="2" y="3" width="2" height="2" fill="#40c040"/><rect x="9" y="3" width="2" height="2" fill="#e04040"/><rect x="13" y="4" width="2" height="2" fill="#40a0f0"/><path d="M3 12 L19 12 L19 19 L16 19 L16 15 L6 15 L6 19 L3 19Z" fill="#9ad0f0"/><rect x="6" y="16" width="10" height="3" fill="#f0d060"/></svg>
<svg class="ico" style="left:132px;top:700px" width="19" height="16" viewBox="0 0 19 16"><rect x="1" y="1" width="17" height="15" fill="#8ac4e6" opacity=".8"/><circle cx="8" cy="8" r="6" fill="#f07a20"/><path d="M6 4.5 L11.5 8 L6 11.5Z" fill="#fff"/></svg>
<div class="a" style="left:164px;top:695px;width:40px;height:25px;border:1px solid rgba(30,70,120,.45);border-radius:2px;box-shadow:inset 0 0 0 1px rgba(255,255,255,.35);background:linear-gradient(rgba(255,255,255,.42),rgba(255,255,255,.22) 50%,rgba(255,255,255,.14) 51%,rgba(255,255,255,.28))"></div>
<div class="a" style="left:247px;top:695px;width:39px;height:25px;border:1px solid rgba(30,70,120,.45);border-radius:2px;box-shadow:inset 0 0 0 1px rgba(255,255,255,.35);background:linear-gradient(rgba(255,255,255,.42),rgba(255,255,255,.22) 50%,rgba(255,255,255,.14) 51%,rgba(255,255,255,.28))"></div>
<div class="a" style="left:289px;top:695px;width:40px;height:25px;border:1px solid rgba(30,70,120,.45);border-radius:2px;box-shadow:inset 0 0 0 1px rgba(255,255,255,.35);background:linear-gradient(rgba(255,255,255,.55),rgba(255,255,255,.32) 50%,rgba(255,255,255,.22) 51%,rgba(255,255,255,.38))"></div>
<div class="a" style="left:330px;top:695px;width:37px;height:25px;border:1px solid rgba(30,70,120,.45);border-radius:2px;box-shadow:inset 0 0 0 1px rgba(255,255,255,.35);background:linear-gradient(rgba(255,255,255,.42),rgba(255,255,255,.22) 50%,rgba(255,255,255,.14) 51%,rgba(255,255,255,.28))"></div>
<div class="a" style="left:370px;top:695px;width:41px;height:25px;border:1px solid rgba(30,70,120,.45);border-radius:2px;box-shadow:inset 0 0 0 1px rgba(255,255,255,.35);background:linear-gradient(rgba(255,255,255,.42),rgba(255,255,255,.22) 50%,rgba(255,255,255,.14) 51%,rgba(255,255,255,.28))"></div>
<svg class="ico" style="left:172px;top:697px" width="22" height="22" viewBox="0 0 22 22"><circle cx="11" cy="11" r="10" fill="#db4437"/><path d="M11 11 L2.3 16 A10 10 0 0 0 11 21 Z" fill="#0f9d58"/><path d="M11 11 L1.3 6 A10 10 0 0 0 2.3 16Z" fill="#0f9d58"/><path d="M11 11 L11 21 A10 10 0 0 0 19.7 6Z" fill="#ffcd40"/><path d="M11 11 L19.7 6 L11 6Z" fill="#db4437"/><circle cx="11" cy="11" r="4.8" fill="#fff"/><circle cx="11" cy="11" r="3.8" fill="#4285f4"/></svg>
<svg class="ico" style="left:214px;top:697px" width="21" height="21" viewBox="0 0 21 21"><defs><radialGradient id="ffg" cx=".5" cy=".6" r=".6"><stop offset="0" stop-color="#ffcf30"/><stop offset=".5" stop-color="#ff8a2a"/><stop offset="1" stop-color="#f2364a"/></radialGradient><radialGradient id="ffp" cx=".5" cy=".5" r=".5"><stop offset="0" stop-color="#9a5cf0"/><stop offset="1" stop-color="#6a2ac8"/></radialGradient></defs><circle cx="10.5" cy="12" r="8.8" fill="url(#ffg)"/><path d="M12 0.5 Q20 5 19.5 12 Q17 6 13 5Z" fill="#ffd23a"/><circle cx="10.5" cy="11.5" r="4.6" fill="url(#ffp)"/><path d="M3 8 Q5 4 9 4.5 Q6 6 6.5 8Z" fill="#ff9a2a"/></svg>
<div class="a" style="left:255px;top:697px;width:22px;height:21px;border:1px solid #0a1a40;border-radius:2px;background:linear-gradient(#2a4aa0,#1a2a70)"></div>
<div class="a nw" style="left:257px;top:697px;font-size:8px;line-height:10px;font-weight:bold;color:#f0f0f0">DEV</div>
<div class="a nw" style="left:256px;top:706px;font-size:9px;line-height:11px;font-weight:bold;color:#2a8ae8">C++</div>
<svg class="ico" style="left:297px;top:699px" width="22" height="18" viewBox="0 0 22 18"><rect x="0.5" y="0.5" width="20" height="16" fill="#f4f4f4" stroke="#888"/><rect x="3" y="4" width="8" height="10" fill="#4a9a70"/><rect x="13" y="4" width="5" height="10" fill="#ddd"/><rect x="16" y="4" width="1.5" height="6" fill="#4a9a70"/></svg>
<svg class="ico" style="left:336px;top:697px" width="21" height="21" viewBox="0 0 21 21"><path d="M2 4 L14 1 L20 17 L7 20Z" fill="#8fd0e8" stroke="#6a9ab0" stroke-width=".5"/><path d="M14 1 L20 17 L17 19Z" fill="#f0f0e0"/><path d="M7 20 L20 17" stroke="#c8a860" stroke-width="1"/></svg>
<div class="a" style="left:379px;top:698px;width:22px;height:21px;border-radius:3px;background:#fff"></div>
<svg class="ico" style="left:382px;top:699px" width="16" height="19" viewBox="0 0 16 19"><ellipse cx="8" cy="11" rx="5.5" ry="7" fill="#111"/><ellipse cx="8" cy="13" rx="3.6" ry="4.5" fill="#fff"/><circle cx="6.2" cy="6" r="1.2" fill="#fff"/><circle cx="9.8" cy="6" r="1.2" fill="#fff"/><path d="M5.5 8 Q8 10 10.5 8" fill="#f8b800"/><path d="M3 10.5 Q8 12.5 13 10.5 L12.5 12 Q8 13.5 3.5 12Z" fill="#e02020"/><ellipse cx="5" cy="18" rx="2.5" ry="1" fill="#f8b800"/><ellipse cx="11" cy="18" rx="2.5" ry="1" fill="#f8b800"/></svg>
<div class="a" style="left:1128px;top:695px;width:1px;height:25px;background:rgba(255,255,255,.0)"></div>
<svg class="ico" style="left:1095px;top:700px" width="12" height="12" viewBox="0 0 12 12"><path d="M1 1.5 L10 0.5 L11.5 10 L2 11.5Z" fill="#f4501e"/><path d="M8.5 3 Q4 2 3.8 4.2 Q3.6 6 7 6.2 Q8.6 6.5 8 7.8 Q6.8 9 4 8" fill="none" stroke="#fff" stroke-width="1.6"/></svg>
<svg class="ico" style="left:1111px;top:699px" width="8" height="13" viewBox="0 0 8 13"><path d="M1.5 4 L4 1.5 L6.5 4" fill="none" stroke="#fff" stroke-width="1.2"/><rect x="2" y="2.5" width="4.5" height="3" fill="none" stroke="#eee" stroke-width=".8"/><path d="M2 9 L4 11 L6 9Z" fill="#fff"/></svg>
<svg class="ico" style="left:1140px;top:701px" width="12" height="12" viewBox="0 0 12 12"><rect x="0" y="0" width="12" height="12" rx="1.5" fill="#222"/><path d="M2 6 Q6 2 10 6 Q6 10 2 6Z" fill="#76b900"/><circle cx="6" cy="6" r="1.4" fill="#222"/></svg>
<svg class="ico" style="left:1156px;top:700px" width="12" height="13" viewBox="0 0 12 13"><circle cx="6" cy="6.5" r="5.5" fill="#b8c4d8"/><circle cx="6" cy="6.5" r="3.2" fill="#e8f0f8"/><rect x="0" y="0" width="3" height="3" fill="#b8c4d8"/><rect x="9" y="0" width="3" height="3" fill="#b8c4d8"/></svg>
<svg class="ico" style="left:1173px;top:701px" width="11" height="11" viewBox="0 0 11 11"><path d="M0.5 3.5 L3 3.5 L6 0.5 L6 10.5 L3 7.5 L0.5 7.5Z" fill="#eee"/><path d="M7.5 3 Q9 5.5 7.5 8 M9 1.5 Q11.5 5.5 9 9.5" fill="none" stroke="#eee" stroke-width=".9"/></svg>
<svg class="ico" style="left:1189px;top:700px" width="12" height="13" viewBox="0 0 12 13"><rect x="0.5" y="0.5" width="5" height="5" fill="#ddd" stroke="#888" stroke-width=".5"/><rect x="3" y="4" width="8" height="6" fill="#cfd8e0" stroke="#555" stroke-width=".7"/><path d="M5 12 L9 12" stroke="#ccc"/></svg>
<svg class="ico" style="left:1204px;top:701px" width="11" height="12" viewBox="0 0 11 12"><path d="M1 0.5 L1 11.5" stroke="#fff" stroke-width="1.4"/><path d="M1.5 1 L6 1.5 L10 2 L8 4 L10 6 L1.5 6Z" fill="#fff"/></svg>
<div class="a nw" style="left:1235px;top:695px;font-size:9px;line-height:12px;color:#fff">16:18</div>
<div class="a nw" style="left:1226px;top:706px;font-size:9px;line-height:12px;color:#fff">2024/12/2</div>
<div class="a" style="left:1271px;top:694px;width:9px;height:26px;border-left:1px solid #0a2a50;background:linear-gradient(90deg,rgba(255,255,255,.25),rgba(255,255,255,.08))"></div>
</body></html>
